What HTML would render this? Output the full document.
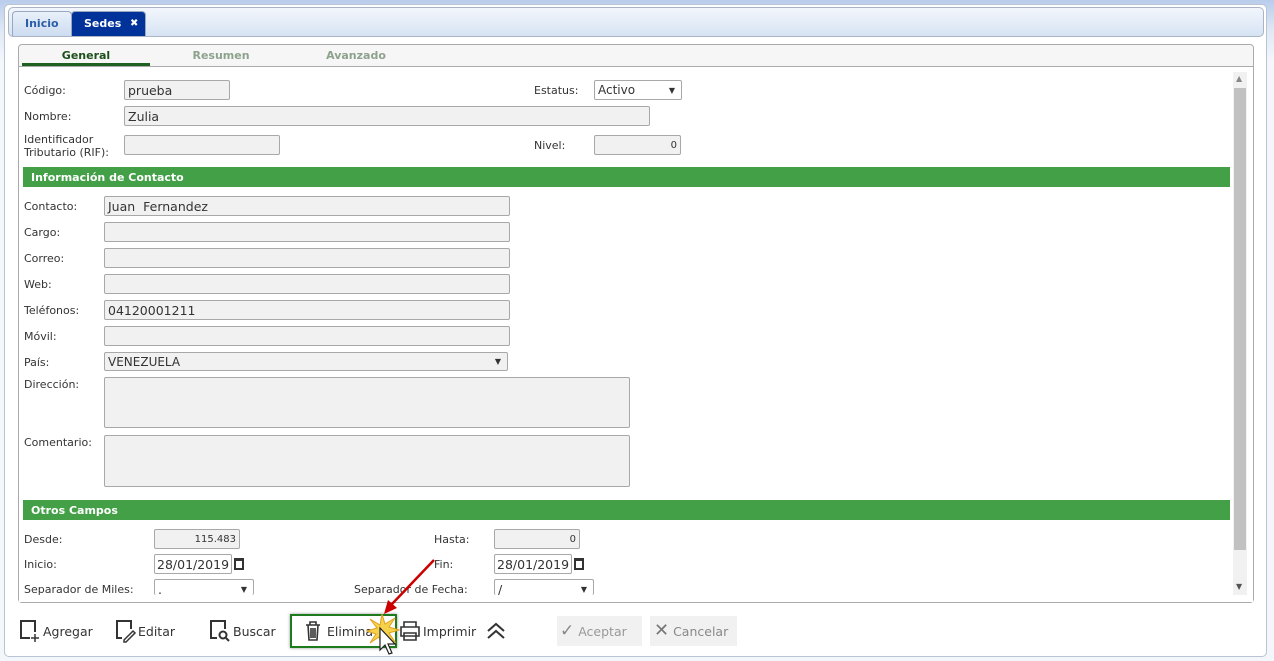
<!DOCTYPE html>
<html><head><meta charset="utf-8"><style>
*{box-sizing:border-box;margin:0;padding:0}
body{width:1274px;height:661px;overflow:hidden;background:linear-gradient(#b9cdec,#dfe8f5 30px,#f3f6fb 60px);font-family:"DejaVu Sans","Liberation Sans",sans-serif;position:relative}
.a{position:absolute;white-space:nowrap}
#outer{left:4px;top:4px;width:1263px;height:653px;background:#fff;border:1px solid #b8c4d4;border-radius:5px}
#tabbar{left:8px;top:7px;width:1256px;height:30px;background:linear-gradient(#f2f6fc,#d7e3f3);border:1px solid #a9b5c5;border-radius:5px}
.tab{top:11px;height:25px;border:1px solid #98a8c0;border-bottom:none;border-radius:4px 4px 0 0;font-size:11px;font-weight:bold;line-height:24px;padding:0 12px}
#inner{left:18px;top:44px;width:1236px;height:559px;border:1px solid #aaa;border-radius:4px;background:#fff}
#hdr{left:19px;top:45px;width:1234px;height:22px;background:#f6f6f6;border-bottom:1px solid #aaa;border-radius:4px 4px 0 0}
.st{top:49px;font-size:11px;font-weight:bold;color:#8da28d;width:130px;text-align:center}
.l{font-size:11px;color:#333;line-height:13px}
.i{background:#f1f1f1;border:1px solid #a8a8a8;border-radius:2px;height:20px;font-size:12.5px;color:#333;padding-left:3px;line-height:19px}
.bar{left:23px;width:1207px;height:20px;background:#43a047;color:#fff;font-size:11px;font-weight:bold;padding-left:8px;line-height:21px}
.r{text-align:right;padding-right:3px;font-size:10px}
.dd::after{content:"▼";position:absolute;right:6px;top:0;font-size:8px}
.btn{top:619px;font-size:12.5px;color:#333;line-height:26px}
.cal{width:10px;height:12px;border:2px solid #333;border-top-width:3px;background:#fff}
</style></head><body>
<div id="outer" class="a"></div>
<div id="tabbar" class="a"></div>
<div class="a tab" style="left:12px;background:linear-gradient(#e9f0fa,#cddcf0);color:#2a5ea8">Inicio</div>
<div class="a tab" style="left:71px;width:75px;background:#00329a;color:#fff">Sedes<span style="position:absolute;left:58px;font-size:10px">✖</span></div>
<div id="inner" class="a"></div>
<div id="hdr" class="a"></div>
<div class="a st" style="left:21px;color:#1c4f1c">General</div>
<div class="a" style="left:22px;top:63px;width:128px;height:3px;background:#1f5f1f"></div>
<div class="a st" style="left:156px">Resumen</div>
<div class="a st" style="left:291px">Avanzado</div>
<div class="a" style="left:1233px;top:72px;width:14px;height:523px;background:#f1f1f1"></div>
<div class="a" style="left:1234px;top:88px;width:12px;height:462px;background:#c1c1c1"></div>
<div class="a" style="left:1236px;top:74px;font-size:8px;color:#888">▲</div>
<div class="a" style="left:1236px;top:582px;font-size:8px;color:#555">▼</div>

<div class="a l" style="left:24px;top:84px">Código:</div><div class="a i" style="left:124px;top:80px;width:106px">prueba</div>
<div class="a l" style="left:534px;top:84px">Estatus:</div><div class="a i dd" style="left:594px;top:80px;width:88px;background:#fff;font-size:12px">Activo</div>
<div class="a l" style="left:24px;top:110px">Nombre:</div><div class="a i" style="left:124px;top:106px;width:526px">Zulia</div>
<div class="a l" style="left:24px;top:133px">Identificador<br>Tributario (RIF):</div><div class="a i" style="left:124px;top:135px;width:156px"></div>
<div class="a l" style="left:534px;top:139px">Nivel:</div><div class="a i r" style="left:594px;top:135px;width:87px">0</div>

<div class="a bar" style="top:167px">Información de Contacto</div>
<div class="a l" style="left:24px;top:200px">Contacto:</div><div class="a i" style="left:104px;top:196px;width:406px">Juan&nbsp; Fernandez</div>
<div class="a l" style="left:24px;top:226px">Cargo:</div><div class="a i" style="left:104px;top:222px;width:406px"></div>
<div class="a l" style="left:24px;top:252px">Correo:</div><div class="a i" style="left:104px;top:248px;width:406px"></div>
<div class="a l" style="left:24px;top:278px">Web:</div><div class="a i" style="left:104px;top:274px;width:406px"></div>
<div class="a l" style="left:24px;top:304px">Teléfonos:</div><div class="a i" style="left:104px;top:300px;width:406px">04120001211</div>
<div class="a l" style="left:24px;top:330px">Móvil:</div><div class="a i" style="left:104px;top:326px;width:406px"></div>
<div class="a l" style="left:24px;top:356px">País:</div><div class="a i dd" style="left:104px;top:352px;width:404px;height:19px;font-size:12px;line-height:18px">VENEZUELA</div>
<div class="a l" style="left:24px;top:378px">Dirección:</div><div class="a i" style="left:104px;top:377px;width:526px;height:51px"></div>
<div class="a l" style="left:24px;top:436px">Comentario:</div><div class="a i" style="left:104px;top:435px;width:526px;height:52px"></div>

<div class="a bar" style="top:500px">Otros Campos</div>
<div class="a l" style="left:24px;top:533px">Desde:</div><div class="a i r" style="left:154px;top:529px;width:86px">115.483</div>
<div class="a l" style="left:434px;top:533px">Hasta:</div><div class="a i r" style="left:494px;top:529px;width:86px">0</div>
<div class="a l" style="left:24px;top:558px">Inicio:</div><div class="a i" style="left:154px;top:554px;width:78px;background:#fff;padding-left:2px">28/01/2019</div><div class="a cal" style="left:234px;top:558px"></div>
<div class="a l" style="left:434px;top:558px">Fin:</div><div class="a i" style="left:494px;top:554px;width:78px;background:#fff;padding-left:2px">28/01/2019</div><div class="a cal" style="left:574px;top:558px"></div>
<div class="a l" style="left:24px;top:583px">Separador de Miles:</div><div class="a i dd" style="left:154px;top:579px;width:100px;height:16px;background:#fff;border-bottom:none">.</div>
<div class="a l" style="left:354px;top:583px">Separador de Fecha:</div><div class="a i dd" style="left:494px;top:579px;width:100px;height:16px;background:#fff;border-bottom:none">/</div>
<div class="a" style="left:19px;top:595px;width:1234px;height:7px;background:#fff"></div>

<svg class="a" style="left:18px;top:618px" width="24" height="26" viewBox="0 0 24 26" fill="none" stroke="#333" stroke-width="2"><path d="M12 20H3V3h14v11"/><path d="M17 16v8M13 20h8" stroke-width="1.5"/></svg>
<div class="a btn" style="left:43px">Agregar</div>
<svg class="a" style="left:114px;top:618px" width="24" height="26" viewBox="0 0 24 26" fill="none" stroke="#333" stroke-width="2"><path d="M8 20H3V3h14v8"/><path d="M10 22l9-9 2 2-9 9h-2z" stroke-width="1.5"/></svg>
<div class="a btn" style="left:138px">Editar</div>
<svg class="a" style="left:208px;top:618px" width="24" height="26" viewBox="0 0 24 26" fill="none" stroke="#333" stroke-width="2"><path d="M9 20H3V3h14v8"/><circle cx="15" cy="17" r="3.5"/><path d="M18 20l3 3"/></svg>
<div class="a btn" style="left:233px">Buscar</div>
<div class="a" style="left:290px;top:614px;width:107px;height:34px;border:2px solid #1d7a1d;box-shadow:0 0 3px #999"></div>
<svg class="a" style="left:304px;top:620px" width="18" height="22" viewBox="0 0 18 22" fill="none" stroke="#333" stroke-width="1.6"><path d="M2 5h14M6 5V2h6v3M4 5l1 15h8l1-15M7 8v10M9 8v10M11 8v10"/></svg>
<div class="a btn" style="left:327px">Elimina</div>
<svg class="a" style="left:366px;top:612px" width="34" height="48" viewBox="0 0 34 48"><path d="M16 2l3 10 10-6-6 9 10 3-10 3 6 9-10-5-3 10-3-10-9 6 6-9-9-3 10-3-7-9 10 6z" fill="#f6d24a" stroke="#e0a020"/><path d="M14 16v22l5-5 4 9 3-1-4-9h7z" fill="#fff" stroke="#222" stroke-width="1.2"/></svg>
<svg class="a" style="left:399px;top:620px" width="22" height="22" viewBox="0 0 22 22" fill="none" stroke="#333" stroke-width="1.6"><path d="M5 7V2h12v5M2 7h18v9H2zM5 13h12v7H5z"/></svg>
<div class="a btn" style="left:423px">Imprimir</div>
<svg class="a" style="left:486px;top:622px" width="20" height="18" viewBox="0 0 20 18" fill="none" stroke="#333" stroke-width="2"><path d="M2 9l8-7 8 7M2 16l8-7 8 7"/></svg>
<div class="a" style="left:557px;top:616px;width:85px;height:30px;background:#f1f1f1"></div>
<div class="a btn" style="left:560px;top:618px;color:#999"><span style="font-size:17px;color:#888">✓</span> Aceptar</div>
<div class="a" style="left:650px;top:616px;width:87px;height:30px;background:#f1f1f1"></div>
<div class="a btn" style="left:654px;top:618px;color:#888"><span style="font-size:18px;color:#777">✕</span> Cancelar</div>
<svg class="a" style="left:0;top:0" width="1274" height="661"><line x1="434" y1="560" x2="392" y2="604" stroke="#c00" stroke-width="2.5"/><path d="M384 614l4-14 9 8z" fill="#c00"/></svg>
</body></html>
